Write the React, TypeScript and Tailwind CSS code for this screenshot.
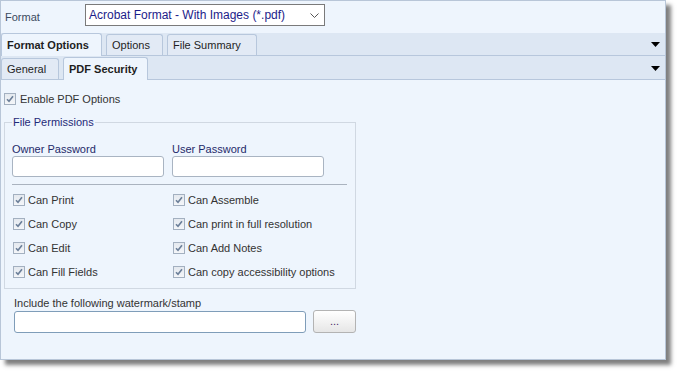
import React from "react";

const font = "font-['Liberation_Sans',Arial,sans-serif]";

function Check({ label }: { label: string }) {
  return (
    <div className="flex h-[24px] items-center gap-[3px]">
      <span className="ml-px flex h-[12px] w-[12px] shrink-0 items-center justify-center border border-[#a3b0c0] bg-gradient-to-b from-[#e4e9ef] to-[#f4f6f9]">
        <svg width="8" height="8" viewBox="0 0 8 8">
          <path d="M1 4.2 L3 6.3 L7 1.2" fill="none" stroke="#6b7f99" strokeWidth="1.6" />
        </svg>
      </span>
      <span className="whitespace-nowrap text-[11px] leading-[13px] text-[#333]">{label}</span>
    </div>
  );
}

function Tab({ label, active, w }: { label: string; active?: boolean; w: string }) {
  if (active) {
    return (
      <div
        className={`${w} -mb-px flex h-[23px] items-center rounded-t-[3px] border-x border-t border-[#b7c7dc] bg-[#eef5fd] pl-[5px] text-[11px] font-bold text-[#1e1e1e]`}
      >
        {label}
      </div>
    );
  }
  return (
    <div
      className={`${w} flex h-[21px] items-center rounded-t-[3px] border-x border-t border-[#b7c7dc] bg-[#e2eaf5] pl-[5px] text-[11px] text-[#1e1e1e]`}
    >
      {label}
    </div>
  );
}

function Arrow() {
  return (
    <svg className="ml-auto mr-[5px] mb-[8px]" width="9" height="5" viewBox="0 0 9 5">
      <path d="M0 0 H9 L4.5 5 Z" fill="#000" />
    </svg>
  );
}

export default function App() {
  return (
    <div className={`h-[374px] w-[682px] bg-white ${font}`}>
      <div className="h-[360px] w-[666px] border border-[#b8c6d8] bg-[#eef5fd] shadow-[5px_5px_4px_rgba(0,0,0,0.5)]">
        {/* format row */}
        <div className="flex h-[32px] items-start pt-[3px]">
          <span className="mt-[5px] w-[84px] pl-[4px] text-[11px] text-[#3b4a5e]">Format</span>
          <div className="flex h-[22px] w-[240px] items-center border border-[#7a7a7a] bg-white pl-[3px] pr-[5px]">
            <span className="text-[12px] text-[#1c1c8a]">Acrobat Format - With Images (*.pdf)</span>
            <svg className="ml-auto" width="9" height="5" viewBox="0 0 9 5">
              <path d="M0.5 0.5 L4.5 4.5 L8.5 0.5" fill="none" stroke="#555" strokeWidth="1" />
            </svg>
          </div>
        </div>

        {/* tab strip 1 */}
        <div className="flex h-[23px] items-end gap-[4px] border-b border-[#b7c7dc] bg-[#dde7f3]">
          <Tab label="Format Options" active w="w-[101px]" />
          <Tab label="Options" w="w-[57px]" />
          <Tab label="File Summary" w="w-[90px]" />
          <Arrow />
        </div>

        {/* tab strip 2 */}
        <div className="flex h-[24px] items-end gap-[4px] border-b border-[#b7c7dc] bg-[#dde7f3]">
          <Tab label="General" w="w-[58px]" />
          <Tab label="PDF Security" active w="w-[85px]" />
          <Arrow />
        </div>

        {/* content */}
        <div className="pl-[3px]">
          <div className="mt-[12px] flex h-[14px] items-center gap-[4px]">
            <span className="flex h-[12px] w-[12px] items-center justify-center border border-[#a3b0c0] bg-gradient-to-b from-[#e4e9ef] to-[#f4f6f9]">
              <svg width="8" height="8" viewBox="0 0 8 8">
                <path d="M1 4.2 L3 6.3 L7 1.2" fill="none" stroke="#6b7f99" strokeWidth="1.6" />
              </svg>
            </span>
            <span className="text-[11px] leading-[13px] text-[#333]">Enable PDF Options</span>
          </div>

          <fieldset className="mt-[9px] w-[352px] border border-[#d0d8e2] px-[7px] pb-[4px]">
            <legend className="px-px text-[11px] leading-[14px] text-[#1f2a78]">File Permissions</legend>
            <div className="mt-[14px] flex gap-[8px]">
              <div className="flex w-[152px] flex-col">
                <span className="text-[11px] leading-[13px] text-[#1f2a6a]">Owner Password</span>
                <div className="h-[21px] rounded-[3px] border border-[#a9b4c2] bg-white" />
              </div>
              <div className="flex w-[152px] flex-col">
                <span className="text-[11px] leading-[13px] text-[#1f2a6a]">User Password</span>
                <div className="h-[21px] rounded-[3px] border border-[#a9b4c2] bg-white" />
              </div>
            </div>
            <div className="mt-[7px] h-px w-[335px] bg-[#aab3bf]" />
            <div className="mt-[3px] grid grid-cols-[160px_160px]">
              <Check label="Can Print" />
              <Check label="Can Assemble" />
              <Check label="Can Copy" />
              <Check label="Can print in full resolution" />
              <Check label="Can Edit" />
              <Check label="Can Add Notes" />
              <Check label="Can Fill Fields" />
              <Check label="Can copy accessibility options" />
            </div>
          </fieldset>

          <div className="ml-[10px] mt-[8px]">
            <span className="block text-[11px] leading-[13px] text-[#333]">Include the following watermark/stamp</span>
            <div className="flex items-end gap-[7px]">
              <div className="h-[22px] w-[292px] rounded-[3px] border border-[#7f9db9] bg-white" />
              <button className="flex h-[23px] w-[43px] items-center justify-center rounded-[3px] border border-[#b3b3b3] bg-gradient-to-b from-white to-[#e6e6e6] text-[11px] text-[#4a2a6a]">
                ...
              </button>
            </div>
          </div>
        </div>
      </div>
    </div>
  );
}
